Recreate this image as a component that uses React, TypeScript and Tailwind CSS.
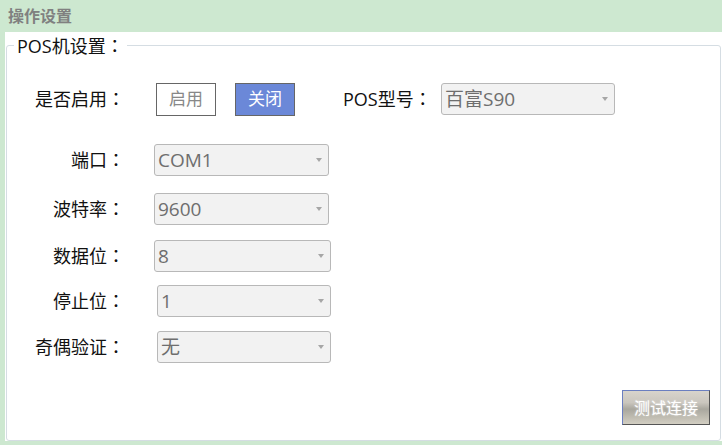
const font = { fontFamily: '"Open Sans", "Noto Sans CJK SC", sans-serif' };
const tc = { fontFamily: '"Noto Sans CJK TC", sans-serif' };

// 全角冒号居中显示
function Label({ text, className }: { text: string; className: string }) {
  return (
    <div className={`text-[18px] text-[#111] ${className}`}>
      {text}
      <span style={tc}>：</span>
    </div>
  );
}

function Select({ value, className }: { value: string; className: string }) {
  return (
    <div
      className={`h-[32px] rounded-[3px] border border-[#b8b8b8] bg-[#f2f2f2] flex items-center justify-between pl-[3px] pr-[6px] ${className}`}
    >
      <span className="text-[19px] leading-none text-[#6e6e6e]">{value}</span>
      <span className="w-0 h-0 border-l-[3px] border-r-[3px] border-t-[4px] border-l-transparent border-r-transparent border-t-[#a6a6a6]" />
    </div>
  );
}

function Row({
  label,
  value,
  className,
  selectClass,
}: {
  label: string;
  value: string;
  className: string;
  selectClass: string;
}) {
  return (
    <div className={`flex items-center ${className}`}>
      <Label text={label} className="w-[118px] text-right" />
      <Select value={value} className={selectClass} />
    </div>
  );
}

export default function App() {
  return (
    <div className="w-[722px] h-[445px] bg-[#cde8d0] flex flex-col overflow-hidden" style={font}>
      {/* 标题栏 */}
      <div className="h-[32px] flex items-center pl-[8px] text-[16px] font-bold text-[#808080]">
        操作设置
      </div>
      <div className="ml-[5px] h-[409px] bg-white pt-[2px] pl-[1px] pr-[1px]">
        <fieldset className="h-[407px] border border-[#d5dde3] rounded-[3px] flex flex-col">
          <legend className="ml-[7px] px-[3px] text-[18px] leading-[22px] text-[#111]">
            POS机设置<span style={tc}>：</span>
          </legend>

          {/* 是否启用 */}
          <div className="flex items-center mt-[25px] h-[34px]">
            <Label text="是否启用" className="w-[118px] text-right" />
            <button className="ml-[31px] w-[60px] h-[33px] border border-[#666] bg-white text-[17px] text-[#888]">
              启用
            </button>
            <button className="ml-[19px] w-[60px] h-[33px] border border-[#666] bg-[#6b88d8] text-[17px] text-white">
              关闭
            </button>
            <Label text="POS型号" className="ml-[48px] w-[98px]" />
            <Select value="百富S90" className="w-[174px]" />
          </div>

          <Row label="端口" value="COM1" className="mt-[28px]" selectClass="ml-[29px] w-[175px]" />
          <Row label="波特率" value="9600" className="mt-[17px]" selectClass="ml-[29px] w-[175px]" />
          <Row label="数据位" value="8" className="mt-[15px]" selectClass="ml-[29px] w-[177px]" />
          <Row label="停止位" value="1" className="mt-[13px]" selectClass="ml-[32px] w-[174px]" />
          <Row label="奇偶验证" value="无" className="mt-[14px]" selectClass="ml-[32px] w-[174px]" />

          <button
            className="self-end mr-[10px] mt-[27px] w-[88px] h-[35px] border border-[#555] border-t-[#6b7fc0] border-l-[#6b7fc0] bg-[linear-gradient(#d8d4cc,#cac6be_35%,#a9a79e_55%,#d2cec2)] text-[16px] text-white [text-shadow:0_0_2px_#e8e8e8]"
          >
            测试连接
          </button>
        </fieldset>
      </div>
    </div>
  );
}
